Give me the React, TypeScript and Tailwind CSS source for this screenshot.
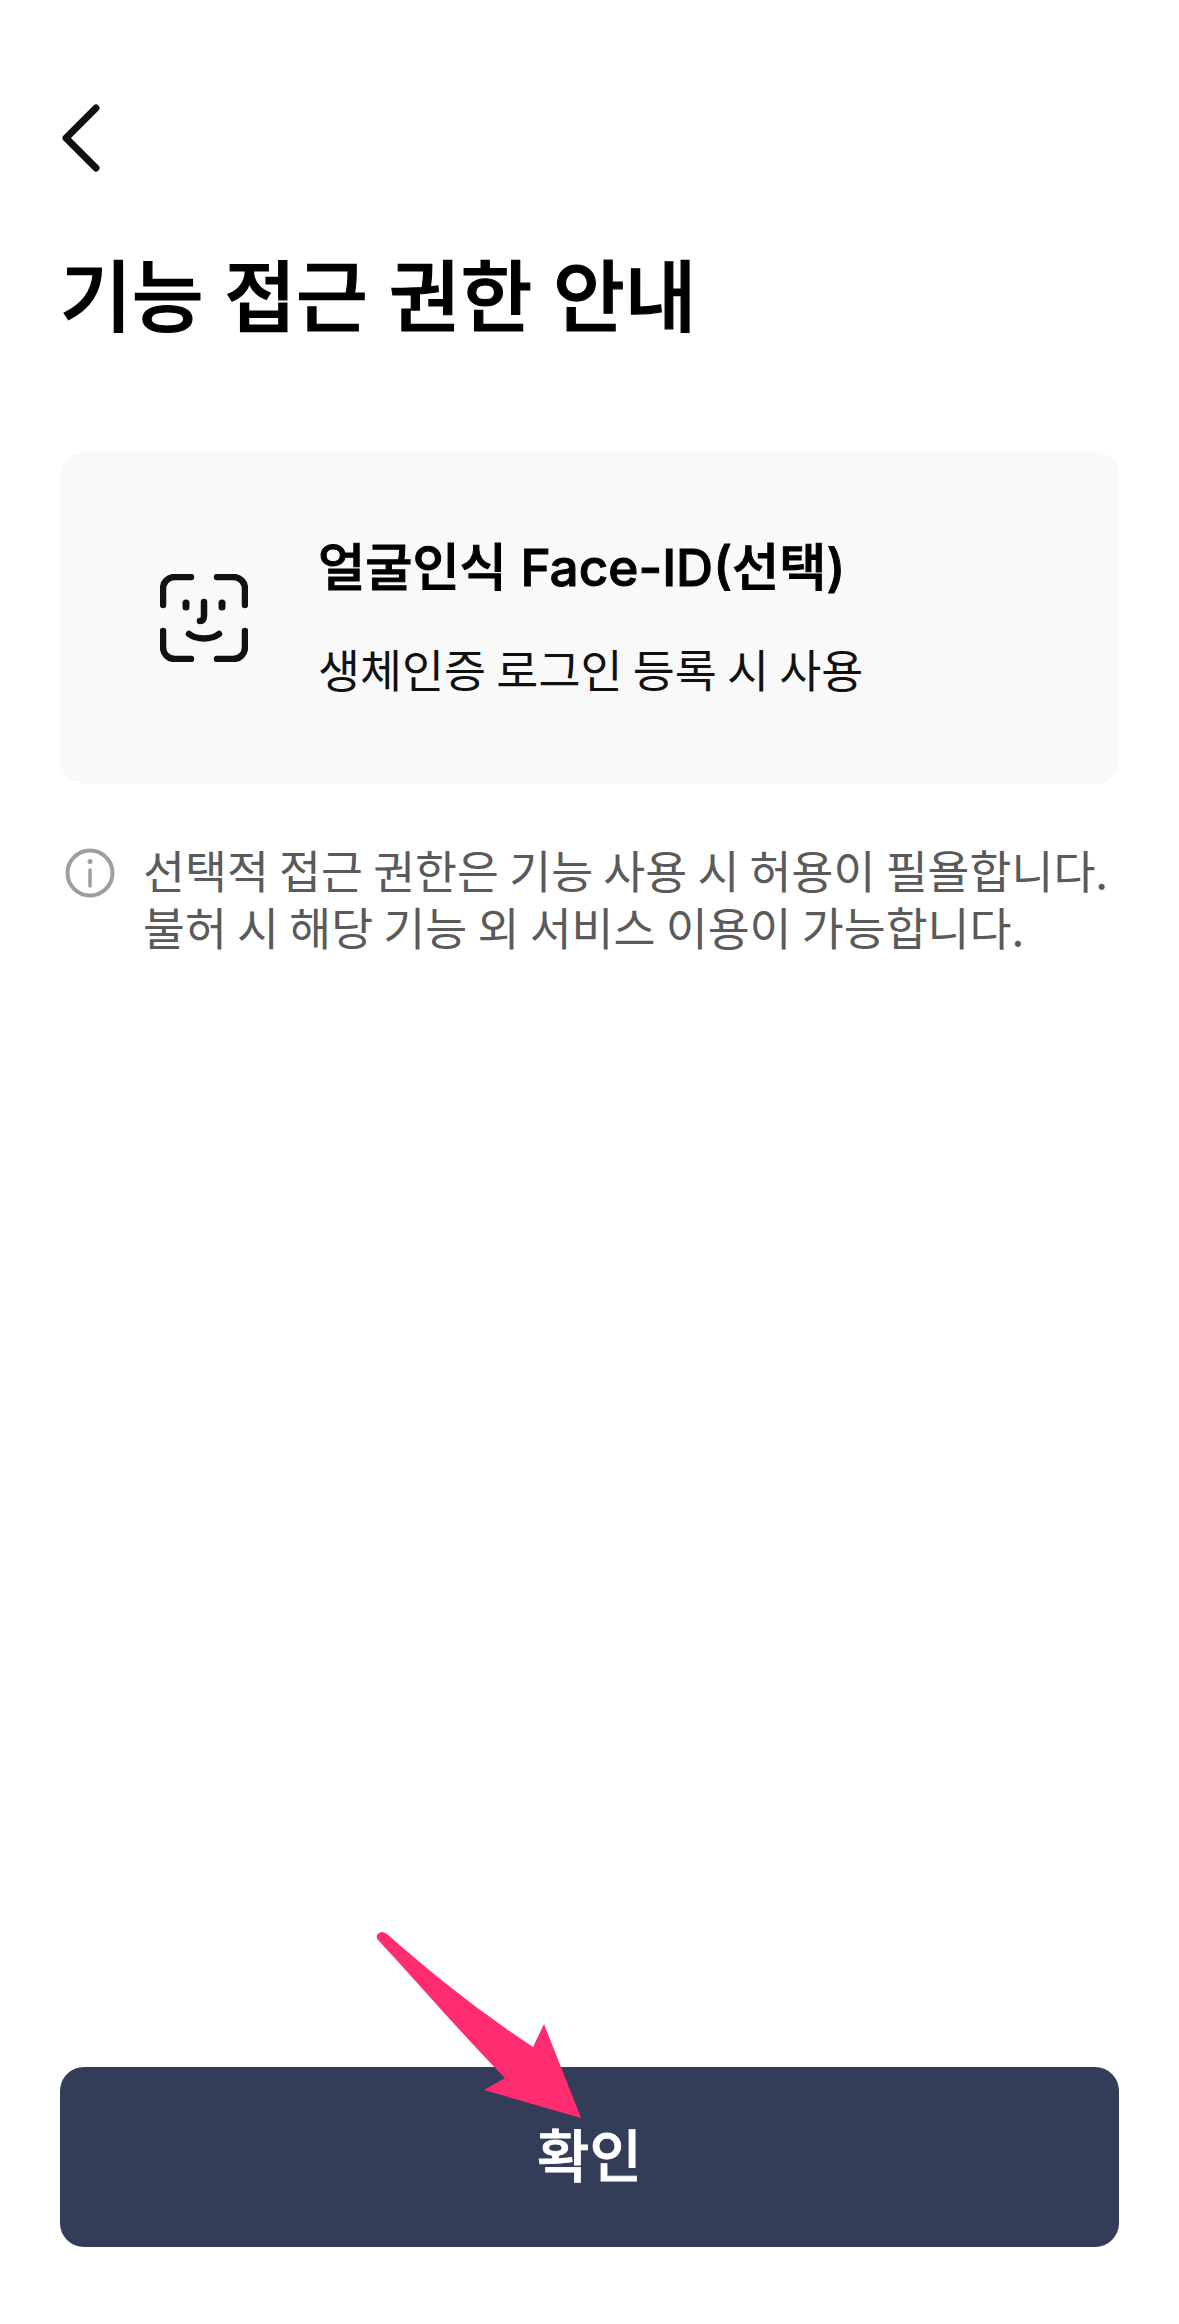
const font = { fontFamily: '"Inter", "Noto Sans CJK KR", sans-serif' };
const hangulFont = { fontFamily: '"Noto Sans CJK KR", "Inter", sans-serif' };

function FaceId() {
  return (
    <svg width="88" height="88" viewBox="0 0 88 88" fill="none" stroke="#111111" strokeWidth="6.5" strokeLinecap="round">
      <path d="M3 31V15C3 8 8 3 15 3H31" />
      <path d="M57 3H73C80 3 85 8 85 15V31" />
      <path d="M3 57V73C3 80 8 85 15 85H31" />
      <path d="M85 57V73C85 80 80 85 73 85H57" />
      <path d="M26 29V33" strokeWidth="7" />
      <path d="M62 29V33" strokeWidth="7" />
      <path d="M44 28V41C44 45 43 47 40 47" />
      <path d="M29 60C37 66 51 66 59 60" />
    </svg>
  );
}

function InfoIcon() {
  return (
    <svg width="50" height="50" viewBox="0 0 50 50" fill="none" stroke="#9e9e9e" strokeWidth="4">
      <circle cx="25" cy="25" r="22.5" />
      <path d="M25 22V38" strokeWidth="3.5" strokeLinecap="round" />
      <circle cx="25" cy="13.5" r="2.5" fill="#9e9e9e" stroke="none" />
    </svg>
  );
}

function Arrow() {
  return (
    <svg className="absolute" width="300" height="300" viewBox="370 1925 300 300" style={{ left: 310, top: -142 }}>
      <path
        d="M379 1941C376 1938 376 1935 379 1933C381 1931 384 1932 387 1934C430 1972 480 2012 533 2047L544 2024L581 2118L484 2090L505 2078C460 2032 420 1985 379 1941Z"
        fill="#ff2d6f"
      />
    </svg>
  );
}

export default function App() {
  return (
    <div className="flex h-[2324px] w-[1179px] flex-col bg-white px-[60px]" style={font}>
      <div className="pt-[104px]">
        <svg width="40" height="68" viewBox="0 0 40 68" fill="none" stroke="#111111" strokeWidth="7" strokeLinecap="round" strokeLinejoin="round" className="ml-[1px]">
          <path d="M35 4L5 34L35 64" />
        </svg>
      </div>
      <h1 className="mt-[76px] text-[78px] leading-[100px] font-medium text-black [-webkit-text-stroke:1.2px_black]">기능 접근 권한 안내</h1>
      <section className="mt-[104px] flex h-[332px] items-center rounded-[24px] bg-[#f9f9f9] pl-[100px]">
        <FaceId />
        <div className="ml-[70px] mt-[-6px]">
          <div className="text-[51.3px] leading-[70px] font-medium text-black [-webkit-text-stroke:1px_black]">얼굴인식 Face-ID(선택)</div>
          <div className="mt-[36px] text-[45.7px] leading-[60px] text-[#111111]" style={hangulFont}>생체인증 로그인 등록 시 사용</div>
        </div>
      </section>
      <div className="mt-[57px] flex pl-[5px]">
        <div className="pt-[7px]"><InfoIcon /></div>
        <p className="ml-[28px] text-[45.6px] leading-[57px] whitespace-nowrap text-[#5a5a5a]" style={hangulFont}>
          선택적 접근 권한은 기능 사용 시 허용이 필욜합니다.
          <br />
          불허 시 해당 기능 외 서비스 이용이 가능합니다.
        </p>
      </div>
      <button className="relative mt-auto mb-[77px] flex h-[180px] items-center justify-center rounded-[24px] bg-[#333c58] text-[57px] font-medium text-white [-webkit-text-stroke:0.8px_white]">
        확인
        <Arrow />
      </button>
    </div>
  );
}
